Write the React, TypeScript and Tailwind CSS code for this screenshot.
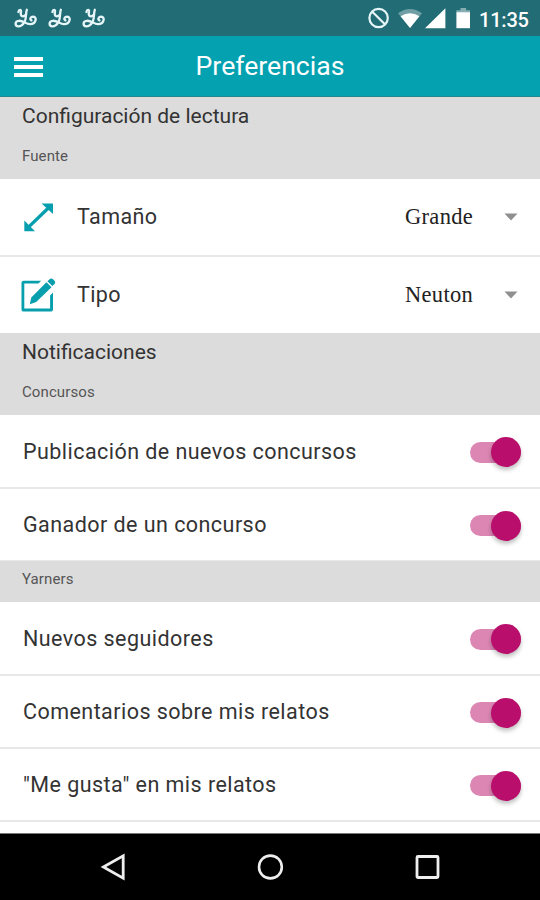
import { useState } from "react";
import type { ReactNode } from "react";

const NOTIFICATIONS_CONTESTS = ["Publicación de nuevos concursos", "Ganador de un concurso"];
const NOTIFICATIONS_YARNERS = [
  "Nuevos seguidores",
  "Comentarios sobre mis relatos",
  '"Me gusta" en mis relatos',
];

function YarnIcon() {
  /** looped thread logo used by the app notifications. */
  return (
    <svg width="23" height="20" viewBox="0 0 23 20" fill="none" stroke="#e6f6f8" strokeWidth="2.3" strokeLinecap="round" strokeLinejoin="round">
      <path d="M4.4 4C5 1.2 7.4 1.4 7 3.8C6 8.6 8.4 9.4 11.8 7" />
      <path d="M12.8 1.8C11.6 5 12.6 10.4 10.6 13.8C9 16.6 6.8 18.4 4.4 18.4C0.6 18.2 0.6 13.2 4.6 12.8C9 12.2 11.8 16 16 16.2C21.8 16.4 23.6 9 19.2 8.6C16.4 8.6 15.4 11.4 17.4 12.4" />
    </svg>
  );
}

function StatusBar() {
  return (
    <div className="flex h-[36px] shrink-0 items-center bg-[#226c75] pl-[14px] pr-[10px] text-white">
      <div className="flex gap-[11px]">
        <YarnIcon />
        <YarnIcon />
        <YarnIcon />
      </div>
      <svg className="ml-auto" width="102" height="24" viewBox="0 0 102 24">
        <circle cx="10.6" cy="12" r="9.2" fill="none" stroke="#e6f6f8" strokeWidth="2.2" />
        <path d="M4.3 5.7L16.9 18.3" stroke="#e6f6f8" strokeWidth="2.2" />
        <path d="M30 7.2Q42 -1.4 54 7.2L42 22Z" fill="#fff" fillOpacity="0.35" />
        <path d="M32.6 10.2Q42 4.4 51.4 10.2L42 22Z" fill="#fff" />
        <path d="M77.4 2.2V22.2H57Z" fill="#fff" />
        <path d="M92.5 2h5.6v2.2h4v2.4H88.4V4.2h4.1z" fill="#fff" fillOpacity="0.45" />
        <path d="M88.4 6.2h13.6v16H88.4z" fill="#fff" />
      </svg>
      <span className="ml-[9px] w-[51px] whitespace-nowrap pt-[3px] text-[20px] font-medium leading-none tracking-[-0.2px]">11:35</span>
    </div>
  );
}

function AppBar() {
  return (
    <header className="grid h-[61px] shrink-0 grid-cols-[60px_1fr_60px] items-center border-b border-[#23878f] bg-[#04a1b1] text-white">
      <button aria-label="Menú" className="flex flex-col gap-[4px] pl-[14px] pt-px">
        <span className="h-[4px] w-[29px] bg-white" />
        <span className="h-[4px] w-[29px] bg-white" />
        <span className="h-[4px] w-[29px] bg-white" />
      </button>
      <h1 className="pt-px text-center text-[26.6px] leading-none">Preferencias</h1>
    </header>
  );
}

function SectionHeader({ title, subtitle }: { title: string; subtitle: string }) {
  return (
    <div className="h-[82px] shrink-0 bg-[#dcdcdc] pl-[22px]">
      <h2 className="pt-[6px] text-[21px] leading-[26px] text-[#333]">{title}</h2>
      <p className="pt-[17px] text-[15px] leading-[20px] tracking-[0.1px] text-[#555]">{subtitle}</p>
    </div>
  );
}

interface SelectRowProps {
  icon: ReactNode;
  label: string;
  value: string;
}

function SelectRow({ icon, label, value }: SelectRowProps) {
  return (
    <div className="flex h-[78px] shrink-0 items-center border-b-2 border-[#e8e8e8] pl-[20px] pr-[22px] last:h-[76px] last:border-b-0">
      {icon}
      <span className="ml-[20px] pb-px text-[21.5px] leading-none tracking-[0.4px] text-[#333]">{label}</span>
      <span className="ml-auto w-[68px] whitespace-nowrap font-['Liberation_Serif',serif] text-[22.5px] leading-none tracking-[0.3px] text-[#222]">
        {value}
      </span>
      <svg className="ml-[31px]" width="14" height="8" viewBox="0 0 14 8">
        <path d="M0.5 0.5h13L7 7.5z" fill="#8f8f8f" />
      </svg>
    </div>
  );
}

function SwitchRow({ label }: { label: string }) {
  const [on, setOn] = useState(true);

  return (
    <div className="flex h-[73px] shrink-0 items-center justify-between border-b-2 border-[#e8e8e8] pl-[23px] pr-[19px] first:h-[74px]">
      <span className="pt-px text-[21.5px] leading-none tracking-[0.45px] text-[#333]">{label}</span>
      <button
        role="switch"
        aria-checked={on}
        aria-label={label}
        onClick={() => setOn(!on)}
        className={`mt-[2px] flex h-[21px] w-[51px] items-center rounded-full ${on ? "justify-end bg-[#dc86b4]" : "justify-start bg-[#bbb]"}`}
      >
        <span className={`size-[30px] rounded-full shadow-[0_3px_4px_rgba(0,0,0,0.25)] ${on ? "bg-[#b90e6b]" : "bg-[#f1f1f1]"}`} />
      </button>
    </div>
  );
}

function NavigationBar() {
  return (
    <nav className="mt-auto flex h-[67px] shrink-0 items-center justify-between border-t border-[#777] bg-black px-[100px]">
      <svg width="28" height="30" viewBox="0 0 28 30" fill="none" stroke="#eee" strokeWidth="2.8">
        <path d="M3.4 15L23.2 3.8V26.2Z" />
      </svg>
      <svg width="28" height="28" viewBox="0 0 28 28" fill="none" stroke="#eee" strokeWidth="2.6">
        <circle cx="13.4" cy="14" r="11.4" />
      </svg>
      <svg width="26" height="28" viewBox="0 0 26 28" fill="none" stroke="#eee" strokeWidth="2.8">
        <rect x="3" y="3.5" width="21" height="21" rx="1" />
      </svg>
    </nav>
  );
}

export default function App() {
  return (
    <div className="flex h-[900px] w-[540px] flex-col overflow-hidden bg-white font-[Roboto,sans-serif]">
      <StatusBar />
      <AppBar />
      <SectionHeader title="Configuración de lectura" subtitle="Fuente" />
      <div className="shrink-0">
        <SelectRow
          label="Tamaño"
          value="Grande"
          icon={
            <svg width="37" height="37" viewBox="0 0 37 37" fill="#079fae">
              <path d="M21.6 4.4H33V15z" />
              <path d="M4.3 21.6V32.2H15z" />
              <path d="M8 28.6L29.4 8" stroke="#079fae" strokeWidth="3.4" />
            </svg>
          }
        />
        <SelectRow
          label="Tipo"
          value="Neuton"
          icon={
            <svg width="37" height="37" viewBox="0 0 37 37" fill="#079fae">
              <path d="M21.2 3.8H3.8C2.4 3.8 1.5 4.7 1.5 6v26.4c0 1.2 0.9 2.1 2.1 2.1h27.3c1.2 0 2.1-0.9 2.1-2.1V15.6l-2.9 2.8v13.2H4.3V6.6h14.2z" />
              <path d="M11.3 20.6L26.4 5.3l5.1 5L16.2 25l-6.4 2.2z" />
              <path d="M27.4 4.2l2.2-2c1-1 2.4-0.9 3.4 0.1l1.5 1.5c0.9 1 0.9 2.3 0 3.2l-2.1 2z" />
            </svg>
          }
        />
      </div>
      <SectionHeader title="Notificaciones" subtitle="Concursos" />
      <div className="h-[146px] shrink-0 overflow-hidden">
        {NOTIFICATIONS_CONTESTS.map((label) => (
          <SwitchRow key={label} label={label} />
        ))}
      </div>
      <div className="h-[41px] shrink-0 bg-[#dcdcdc] pl-[22px] pt-[8px] text-[15px] leading-[20px] tracking-[0.1px] text-[#555]">
        Yarners
      </div>
      <div className="shrink-0">
        {NOTIFICATIONS_YARNERS.map((label) => (
          <SwitchRow key={label} label={label} />
        ))}
      </div>
      <NavigationBar />
    </div>
  );
}
